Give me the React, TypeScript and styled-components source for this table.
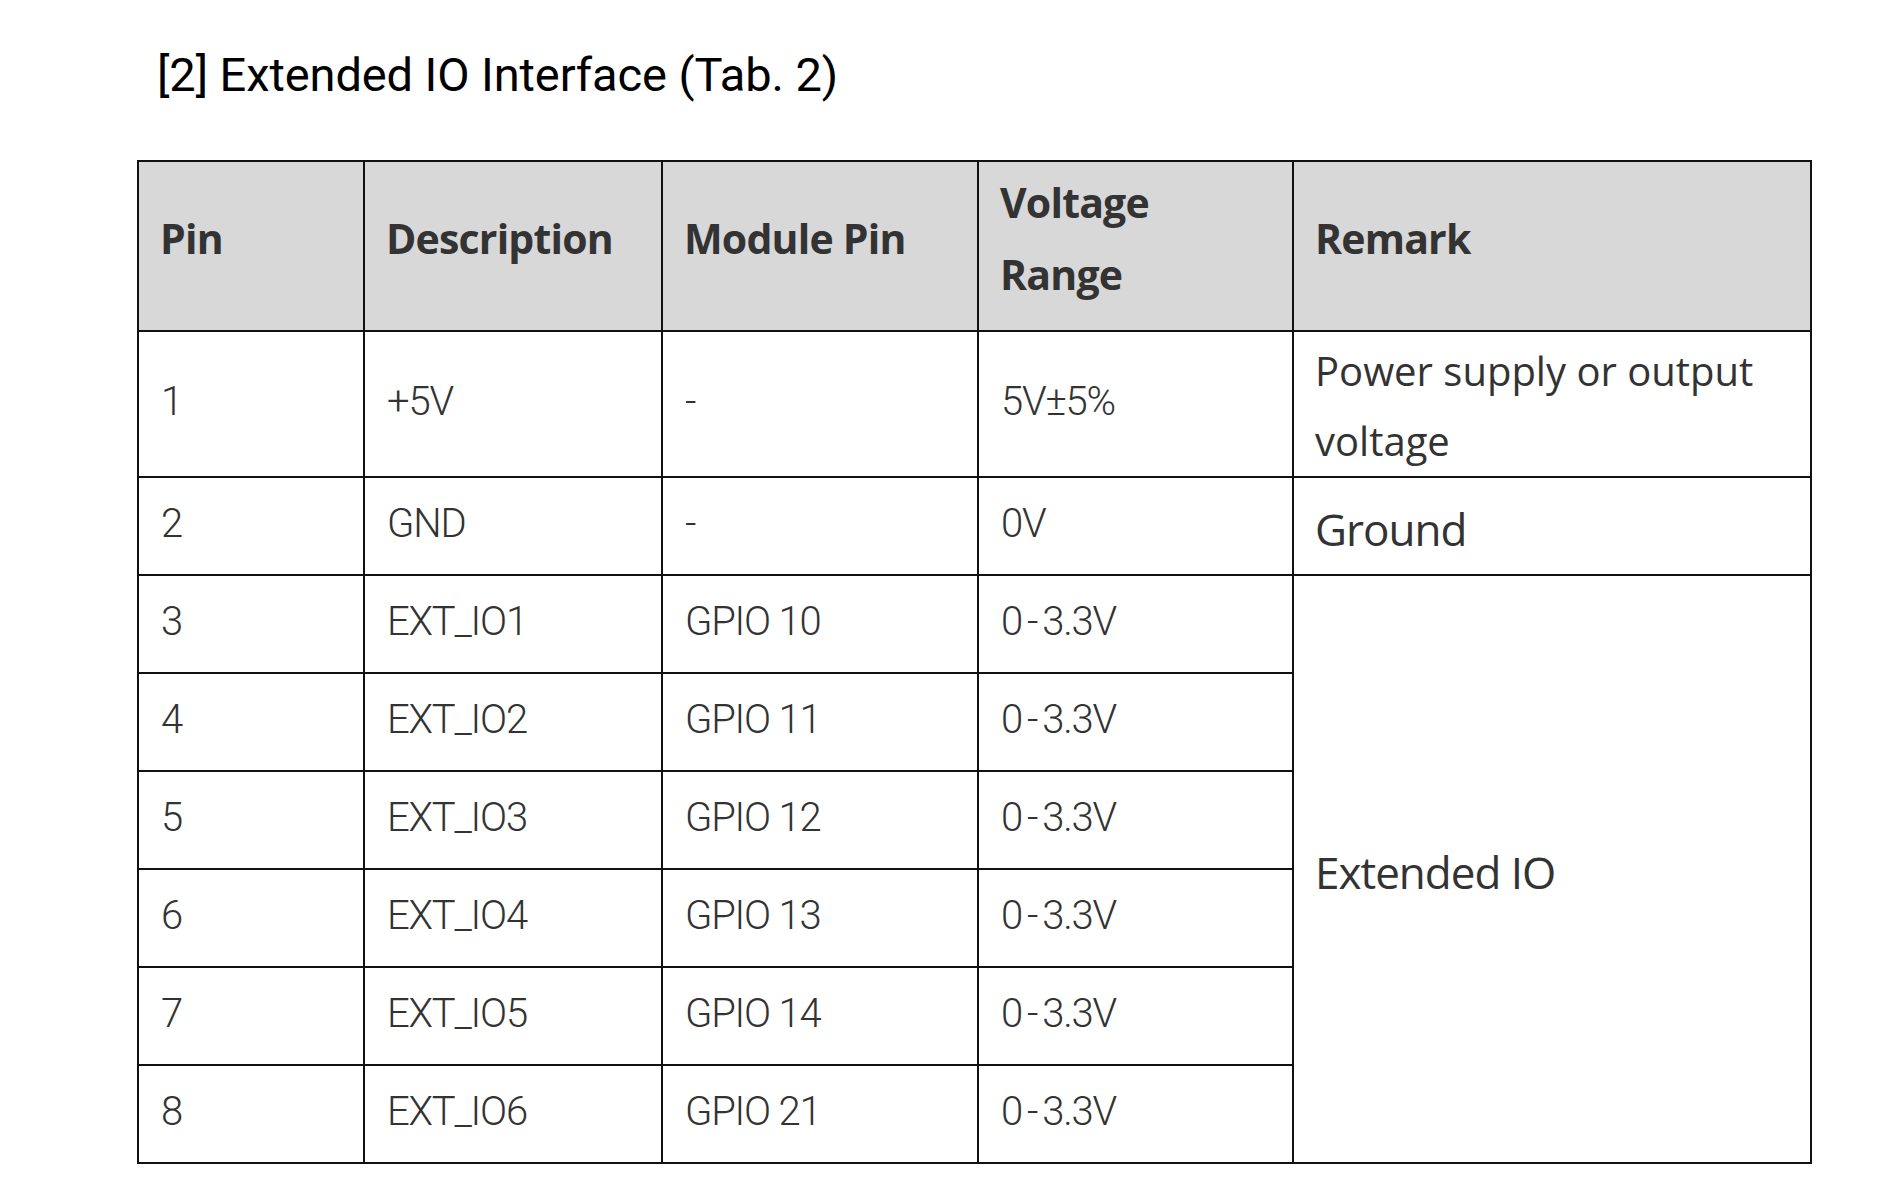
import styled, { createGlobalStyle } from 'styled-components';

const GlobalStyle = createGlobalStyle`
  html, body {
    margin: 0;
    padding: 0;
    background: #ffffff;
  }
`;

interface PinRow {
  pin: string;
  desc: string;
  module: string;
}

const rows: PinRow[] = [
  { pin: '3', desc: 'EXT_IO1', module: 'GPIO 10' },
  { pin: '4', desc: 'EXT_IO2', module: 'GPIO 11' },
  { pin: '5', desc: 'EXT_IO3', module: 'GPIO 12' },
  { pin: '6', desc: 'EXT_IO4', module: 'GPIO 13' },
  { pin: '7', desc: 'EXT_IO5', module: 'GPIO 14' },
  { pin: '8', desc: 'EXT_IO6', module: 'GPIO 21' },
];

const colWidths = [226, 298, 316, 315, 518];

function App() {
  return (
    <Page>
      <GlobalStyle />
      <Title>[2] Extended IO Interface (Tab. 2)</Title>
      <Table>
        <colgroup>
          {colWidths.map((w, i) => (
            <col key={i} style={{ width: w }} />
          ))}
        </colgroup>
        <thead>
          <HeadRow>
            <Th>Pin</Th>
            <Th>Description</Th>
            <Th>Module Pin</Th>
            <Th>
              Voltage
              <br />
              Range
            </Th>
            <Th>Remark</Th>
          </HeadRow>
        </thead>
        <tbody>
          <BodyRow tall>
            <Td>1</Td>
            <Td>+5V</Td>
            <Td>-</Td>
            <Td>5V±5%</Td>
            <RemarkTd>
              Power supply or output
              <br />
              voltage
            </RemarkTd>
          </BodyRow>
          <BodyRow>
            <Td>2</Td>
            <Td>GND</Td>
            <Td>-</Td>
            <Td>0V</Td>
            <RemarkTd big>Ground</RemarkTd>
          </BodyRow>
          {rows.map((r, i) => (
            <BodyRow key={r.pin}>
              <Td>{r.pin}</Td>
              <Td>{r.desc}</Td>
              <Td>{r.module}</Td>
              <Td>
                0<Dash>-</Dash>3.3V
              </Td>
              {i === 0 && (
                <RemarkTd big rowSpan={rows.length}>
                  Extended IO
                </RemarkTd>
              )}
            </BodyRow>
          ))}
        </tbody>
      </Table>
    </Page>
  );
}

export default App;

const Page = styled.div`
  width: 1881px;
  height: 1203px;
  box-sizing: border-box;
  padding: 52px 0 0 137px;
  background: #ffffff;
`;

const Title = styled.h2`
  margin: 0 0 62px 20px;
  font-family: Roboto, 'Noto Sans', sans-serif;
  font-weight: 400;
  font-size: 47px;
  line-height: 46px;
  letter-spacing: -0.1px;
  color: #000000;
`;

const Table = styled.table`
  width: 1674px;
  table-layout: fixed;
  border-collapse: collapse;
  border: 2px solid #111;
`;

const HeadRow = styled.tr`
  height: 170px;
  background: #d8d8d8;
`;

const BodyRow = styled.tr<{ tall?: boolean }>`
  height: ${({ tall }) => (tall ? '144px' : '98px')};
`;

const Th = styled.th`
  border: 2px solid #111;
  padding: 0 0 17px 21px;
  text-align: left;
  vertical-align: middle;
  font-family: 'Open Sans', 'Noto Sans', sans-serif;
  font-weight: 700;
  font-size: 41px;
  line-height: 72px;
  letter-spacing: -0.8px;
  color: #333333;
`;

const Td = styled.td`
  border: 2px solid #111;
  padding: 0 0 5px 22px;
  vertical-align: middle;
  font-family: Roboto, 'Noto Sans', sans-serif;
  font-weight: 300;
  font-size: 40px;
  line-height: 72px;
  letter-spacing: -1.2px;
  color: #333333;
`;

const Dash = styled.span`
  padding: 0 5px;
`;

const RemarkTd = styled.td<{ big?: boolean }>`
  border: 2px solid #111;
  padding: ${({ big }) => (big ? '6px 0 0 21px' : '4px 0 0 21px')};
  vertical-align: middle;
  font-family: 'Open Sans', 'Noto Sans', sans-serif;
  font-weight: 400;
  font-size: ${({ big }) => (big ? '44px' : '40px')};
  line-height: ${({ big }) => (big ? '72px' : '70px')};
  letter-spacing: ${({ big }) => (big ? '-1px' : '0px')};
  color: #333333;
`;
